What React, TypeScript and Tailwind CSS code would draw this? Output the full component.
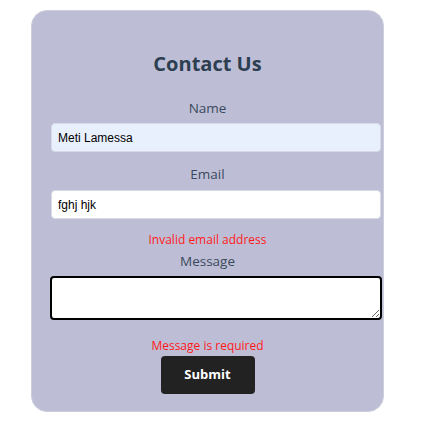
import { useState } from "react";

export default function App() {
  const [name, setName] = useState("Meti Lamessa");
  const [email, setEmail] = useState("fghj hjk");
  const [message, setMessage] = useState("");

  return (
    <div className="min-h-screen bg-white pt-[10px] pl-[31px] font-['Open_Sans',sans-serif]">
      <form
        className="w-[353px] h-[402px] rounded-2xl bg-[#bdbed6] border border-[#cdcedc] px-[19px] flex flex-col items-center"
        onSubmit={(e) => e.preventDefault()}
      >
        <h2 className="mt-[41px] text-[20px] leading-[24px] font-bold text-[#2c3e50]">Contact Us</h2>

        {/* Name */}
        <label className="mt-[23px] text-[13.5px] leading-[18px] text-[#3a4a5c]">Name</label>
        <input
          value={name}
          onChange={(e) => setName(e.target.value)}
          className="mt-[6px] self-start w-[330px] h-[29px] rounded bg-[#e8f0fe] border border-[#d8dbe6] pl-[6px] text-[12px] text-black font-['Liberation_Sans',sans-serif] outline-none"
        />

        {/* Email */}
        <label className="mt-[13px] text-[13.5px] leading-[18px] text-[#3a4a5c]">Email</label>
        <input
          value={email}
          onChange={(e) => setEmail(e.target.value)}
          className="mt-[7px] self-start w-[330px] h-[29px] rounded bg-white border border-[#d8dbe6] pl-[6px] text-[12px] text-black font-['Liberation_Sans',sans-serif] outline-none"
        />
        <p className="mt-[13px] text-[12px] leading-[16px] text-[#ff1a1a]">Invalid email address</p>

        {/* Message */}
        <label className="mt-[4px] text-[13.5px] leading-[18px] text-[#3a4a5c]">Message</label>
        <textarea
          autoFocus
          value={message}
          onChange={(e) => setMessage(e.target.value)}
          className="mt-[6px] self-start -ml-[1px] w-[332px] h-[44px] rounded bg-white border-2 border-black px-[5px] py-[3px] text-[12px] text-black caret-black font-['Liberation_Sans',sans-serif] outline-none"
        />
        <p className="mt-[18px] text-[12px] leading-[16px] text-[#ff1a1a]">Message is required</p>

        <button
          type="submit"
          className="mt-[2px] w-[94px] h-[38px] rounded bg-[#222222] text-white text-[13px] font-bold"
        >
          Submit
        </button>
      </form>
    </div>
  );
}
